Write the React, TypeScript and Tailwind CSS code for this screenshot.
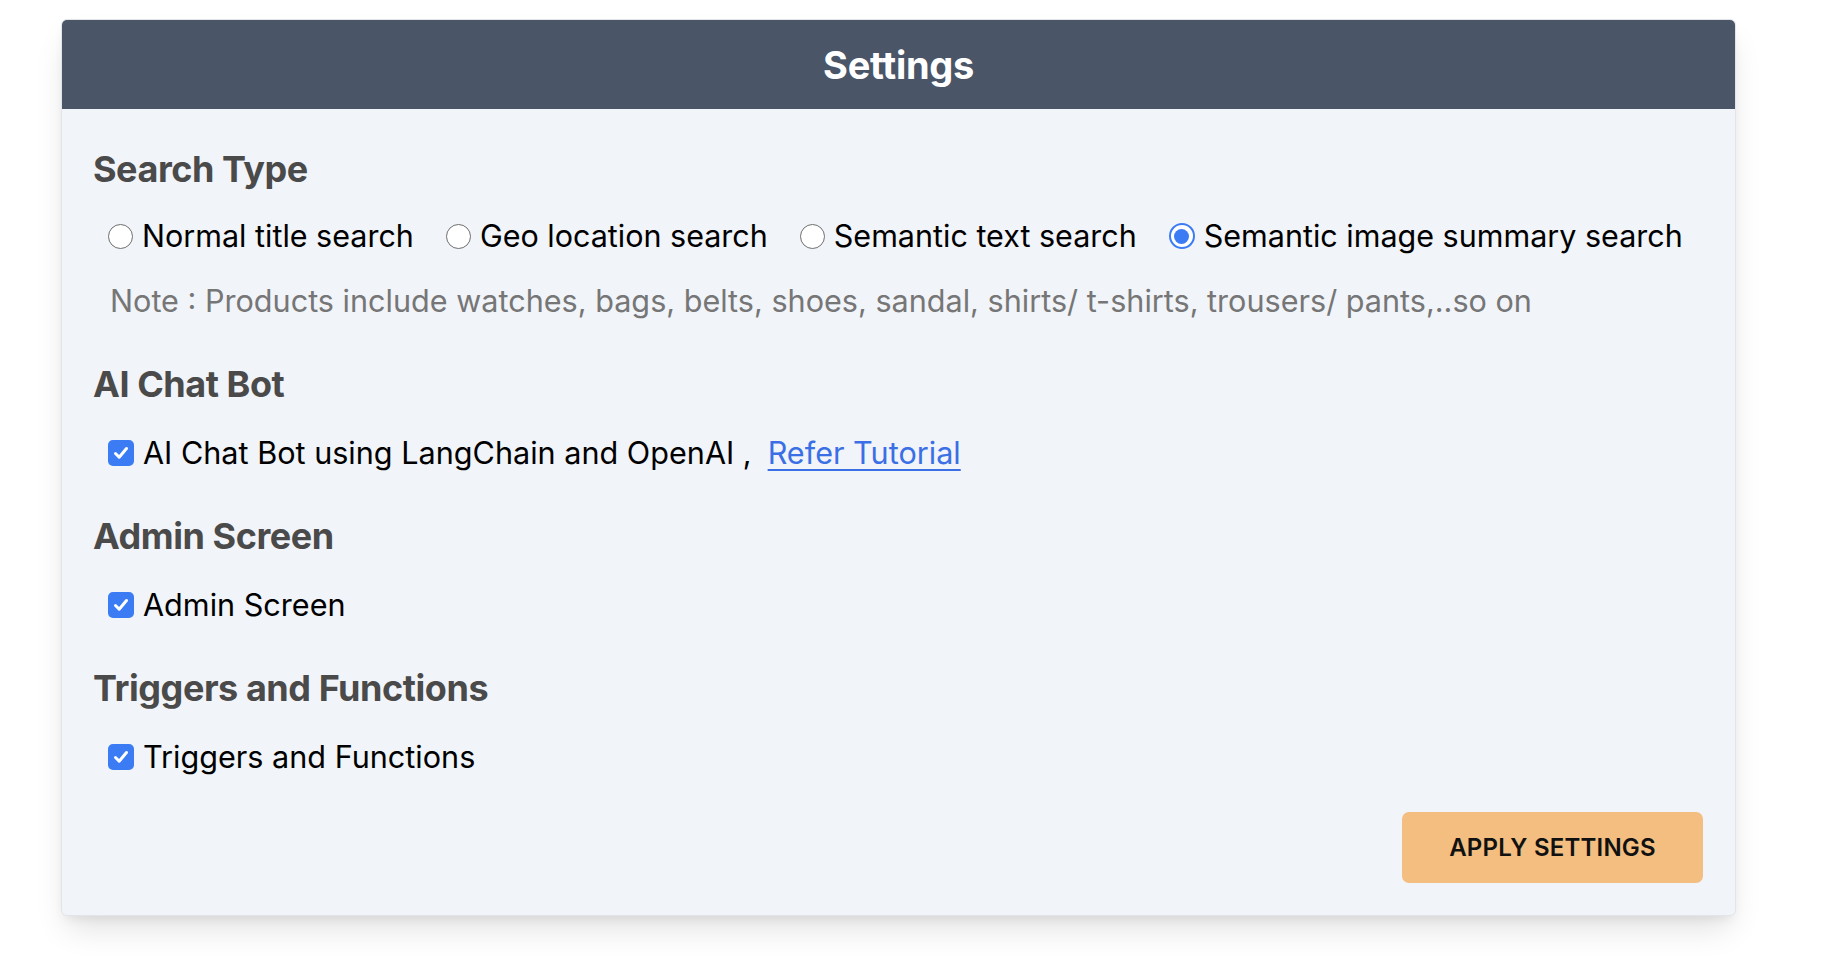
import React from "react";

function Radio({ checked }: { checked?: boolean }) {
  if (checked) {
    return (
      <span className="flex h-[26px] w-[26px] shrink-0 items-center justify-center rounded-full border-[2px] border-[#3b7cf5] bg-white">
        <span className="h-[15px] w-[15px] rounded-full bg-[#3b7cf5]" />
      </span>
    );
  }
  return <span className="h-[25px] w-[25px] shrink-0 rounded-full border-[1.5px] border-[#6e6e6e] bg-white" />;
}

function Check() {
  return (
    <span className="flex h-[26px] w-[26px] shrink-0 items-center justify-center rounded-[5px] bg-[#3b7cf5]">
      <svg width="18" height="18" viewBox="0 0 18 18" fill="none">
        <path d="M3.5 9.5 L7.2 13.2 L14.5 4.5" stroke="white" strokeWidth="3" strokeLinecap="round" strokeLinejoin="round" />
      </svg>
    </span>
  );
}

function Heading({ children, mt }: { children: React.ReactNode; mt: string }) {
  return (
    <h2 className={`${mt} text-[36px] font-bold leading-[44px] text-[#4a4a4a] tracking-[-0.45px]`}>{children}</h2>
  );
}

function CheckRow({ children }: { children: React.ReactNode }) {
  return (
    <div className="mt-[29px] flex h-[36px] items-center pl-[15px] text-[30.6px] leading-[36px] text-black">
      <Check />
      <span className="ml-[9px]">{children}</span>
    </div>
  );
}

export default function App() {
  const options = [
    { label: "Normal title search", checked: false },
    { label: "Geo location search", checked: false },
    { label: "Semantic text search", checked: false },
    { label: "Semantic image summary search", checked: true },
  ];
  return (
    <div className="min-h-[956px] w-[1822px] bg-white pt-[19px] pl-[61px]" style={{ fontFamily: "Inter, 'Noto Sans', sans-serif" }}>
      <div className="w-[1675px] overflow-hidden rounded-[6px] border border-[#e2e4e8] bg-[#f1f4f9] shadow-[0_18px_30px_-6px_rgba(0,0,0,0.12),0_6px_12px_-4px_rgba(0,0,0,0.08)]">
        <div className="flex h-[89px] items-center justify-center bg-[#4a5568]">
          <h1 className="text-[38px] font-bold leading-[44px] text-white tracking-[-0.3px]">Settings</h1>
        </div>
        <div className="px-[31px] pt-[38px] pb-[32px]">
          <Heading mt="mt-0">Search Type</Heading>
          <div className="mt-[27px] flex h-[36px] items-center pl-[15px] text-[30.5px] leading-[36px] text-black">
            {options.map((o, i) => (
              <label key={o.label} className={`flex items-center ${i > 0 ? "ml-[32px]" : ""}`}>
                <Radio checked={o.checked} />
                <span className="ml-[9px] whitespace-nowrap">{o.label}</span>
              </label>
            ))}
          </div>
          <p className="mt-[29px] pl-[17px] text-[30.6px] leading-[36px] text-[#767676]">
            Note : Products include watches, bags, belts, shoes, sandal, shirts/ t-shirts, trousers/ pants,..so on
          </p>
          <Heading mt="mt-[43px]">AI Chat Bot</Heading>
          <CheckRow>
            AI Chat Bot using LangChain and OpenAI ,
            <a href="#" className="ml-[16px] text-[#3a6fe6] underline decoration-[2px] underline-offset-[5px]">
              Refer Tutorial
            </a>
          </CheckRow>
          <Heading mt="mt-[43px]">Admin Screen</Heading>
          <CheckRow>Admin Screen</CheckRow>
          <Heading mt="mt-[43px]">Triggers and Functions</Heading>
          <CheckRow>Triggers and Functions</CheckRow>
          <div className="mt-[37px] flex justify-end pr-[1px]">
            <button className="flex h-[71px] w-[301px] items-center justify-center rounded-[7px] bg-[#f3be80] text-[24px] font-semibold tracking-[0.2px] text-[#111]">
              APPLY SETTINGS
            </button>
          </div>
        </div>
      </div>
    </div>
  );
}
